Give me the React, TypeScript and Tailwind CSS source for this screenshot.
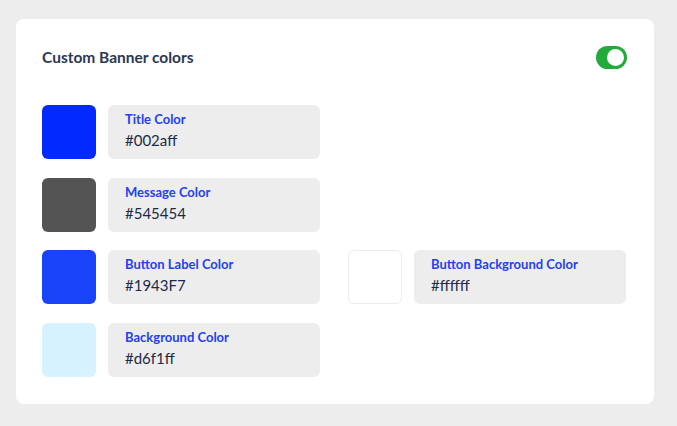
const fields = [
  { label: "Title Color", value: "#002aff", swatch: "bg-[#002aff]" },
  null,
  { label: "Message Color", value: "#545454", swatch: "bg-[#545454]" },
  null,
  { label: "Button Label Color", value: "#1943F7", swatch: "bg-[#1943f7]" },
  { label: "Button Background Color", value: "#ffffff", swatch: "bg-white border border-[#ececec]" },
  { label: "Background Color", value: "#d6f1ff", swatch: "bg-[#d6f1ff]" },
  null,
];

function ColorField({ label, value, swatch }: { label: string; value: string; swatch: string }) {
  return (
    <div className="flex gap-3">
      <div className={`w-[54px] h-[54px] rounded-md shrink-0 ${swatch}`} />
      <div className="w-[212px] h-[54px] rounded-md bg-[#ededed] pl-[17px] pt-[5px]">
        <div className="text-[13px] font-bold text-[#2340f2] leading-[18px]">{label}</div>
        <div className="text-[15px] text-[#1c2a48] leading-[22px] mt-[1px]">{value}</div>
      </div>
    </div>
  );
}

export default function App() {
  return (
    <div className="min-h-[426px] bg-[#ededed] pt-[19px] px-4 font-['Lato',sans-serif]">
      <div className="w-[638px] h-[385px] bg-white rounded-lg px-[26px] pt-[26px]">
        <div className="flex items-center justify-between">
          <h2 className="text-[15.5px] font-bold text-[#2b3852] leading-[24px]">Custom Banner colors</h2>
          <div className="w-[31px] h-[23px] rounded-full bg-[#22aa3a] flex items-center justify-end pr-[3px] mr-[1px]">
            <div className="w-[17px] h-[17px] rounded-full bg-white" />
          </div>
        </div>
        <div className="grid grid-cols-[278px_278px] gap-x-[28px] gap-y-[18.5px] mt-[36px]">
          {fields.map((f, i) => (f ? <ColorField key={i} {...f} /> : <div key={i} />))}
        </div>
      </div>
    </div>
  );
}
